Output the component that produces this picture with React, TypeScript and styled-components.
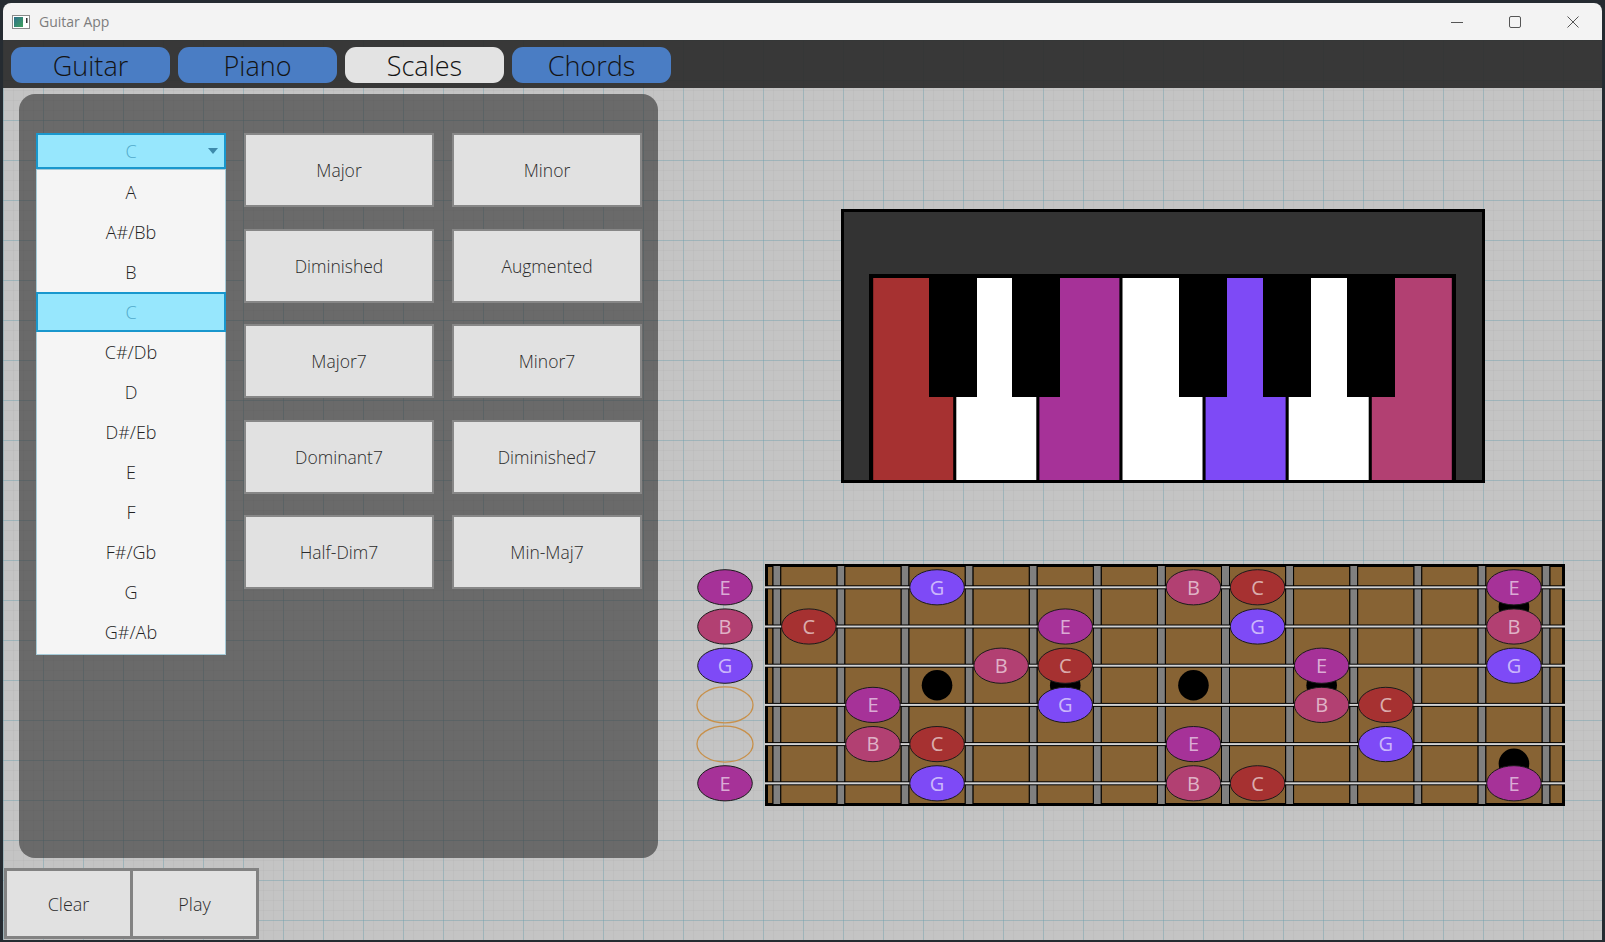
import React from "react";
import styled, { createGlobalStyle } from "styled-components";

const GlobalStyle = createGlobalStyle`
  html, body { margin: 0; padding: 0; }
  body {
    width: 1605px;
    height: 942px;
    overflow: hidden;
    background: #252b31;
    font-family: "Open Sans", "Noto Sans", sans-serif;
  }
  * { box-sizing: border-box; }
`;

const Desktop = styled.div`
  padding: 3px 3px 0 3px;
`;

const Window = styled.div`
  width: 1599px;
  height: 937px;
  display: flex;
  flex-direction: column;
  border-radius: 8px 8px 0 0;
  overflow: hidden;
`;

const TitleBar = styled.div`
  flex: none;
  height: 37px;
  background: #f3f3f3;
  display: flex;
  align-items: center;
  padding-left: 9px;
`;

const TitleText = styled.span`
  margin-left: 9px;
  font-size: 14px;
  color: #7d7d7d;
  line-height: 1;
`;

const Controls = styled.div`
  margin-left: auto;
  display: flex;
  height: 100%;
`;

const ControlButton = styled.div`
  width: 58px;
  height: 100%;
  display: flex;
  align-items: center;
  justify-content: center;
`;

const Content = styled.div`
  flex: 1;
  display: flex;
  flex-direction: column;
  background-color: #c4c4c4;
  background-image:
    linear-gradient(to right, rgba(100, 160, 175, 0.36) 1px, transparent 1px),
    linear-gradient(to bottom, rgba(100, 160, 175, 0.36) 1px, transparent 1px),
    linear-gradient(to right, rgba(0, 0, 0, 0.025) 1px, transparent 1px),
    linear-gradient(to bottom, rgba(0, 0, 0, 0.025) 1px, transparent 1px);
  background-size: 40px 40px, 40px 40px, 10px 10px, 10px 10px;
`;

const TabBar = styled.div`
  flex: none;
  height: 48px;
  padding: 7px 0 5px 8px;
  display: flex;
  gap: 8px;
  background: rgba(45, 45, 45, 0.93);
`;

const Tab = styled.div<{ $active?: boolean }>`
  width: 159px;
  height: 36px;
  border-radius: 11px;
  background: ${(p) => (p.$active ? "#e3e3e3" : "#4a7dc4")};
  color: #141414;
  font-size: 27px;
  font-weight: 300;
  display: flex;
  align-items: center;
  justify-content: center;
  line-height: 1;
`;

const Body = styled.div`
  flex: none;
  display: flex;
  align-items: flex-start;
  padding: 6px 0 0 16px;
`;

const Panel = styled.div`
  flex: none;
  width: 639px;
  height: 764px;
  border-radius: 16px;
  background: rgba(50, 50, 50, 0.62);
  padding: 39px 16px 0 17px;
  display: flex;
  align-items: flex-start;
  gap: 18px;
`;

const DropColumn = styled.div`
  width: 190px;
  display: flex;
  flex-direction: column;
`;

const DropHeader = styled.div`
  height: 36px;
  border: 2px solid #1997cd;
  background: #97e7fd;
  color: #52aacb;
  font-size: 18px;
  font-weight: 300;
  display: grid;
  grid-template-columns: 20px 1fr 20px;
  align-items: center;
  justify-items: center;
`;

const Caret = styled.span`
  width: 0;
  height: 0;
  border-left: 5px solid transparent;
  border-right: 5px solid transparent;
  border-top: 6px solid #3d8aab;
  margin-left: -2px;
`;

const DropList = styled.div`
  border: 1px solid #a6cbd8;
  background: #f5f5f5;
  padding: 2px 0;
`;

const DropItem = styled.div<{ $selected?: boolean }>`
  height: 40px;
  display: flex;
  align-items: center;
  justify-content: center;
  font-size: 18px;
  font-weight: 350;
  color: ${(p) => (p.$selected ? "#52aacb" : "#222")};
  background: ${(p) => (p.$selected ? "#97e7fd" : "transparent")};
  border: ${(p) => (p.$selected ? "2px solid #1997cd" : "none")};
  margin: ${(p) => (p.$selected ? "0 -1px" : "0")};
`;

const ButtonGrid = styled.div`
  display: grid;
  grid-template-columns: 190px 190px;
  grid-auto-rows: 74px;
  column-gap: 18px;
  row-gap: 21.5px;
`;

const ChordButton = styled.div`
  background: #e1e1e1;
  border: 2px solid #878787;
  color: #2b2b2b;
  font-size: 17.5px;
  font-weight: 350;
  display: flex;
  align-items: center;
  justify-content: center;
`;

const RightColumn = styled.div`
  display: flex;
  flex-direction: column;
  align-items: flex-start;
`;

const PianoBox = styled.div`
  margin: 115px 0 0 183px;
  width: 644px;
  height: 274px;
  border: 3px solid #000;
  background: #333333;
  padding: 62px 0 0 25px;
`;

const KeysFrame = styled.div`
  width: 587px;
  border: 4px solid #000;
  border-bottom: none;
  background: #000;
  display: flex;
`;

const FretSvg = styled.svg`
  display: block;
  margin: 77px 0 0 32px;
`;

const Footer = styled.div`
  display: flex;
  margin-top: 10px;
  padding-left: 1px;
`;

const FooterButton = styled.div`
  width: 129px;
  height: 71px;
  background: #e1e1e1;
  border: 3px solid #828282;
  color: #2b2b2b;
  font-size: 18px;
  font-weight: 350;
  display: flex;
  align-items: center;
  justify-content: center;
  & + & {
    margin-left: -3px;
  }
`;

const COLORS: Record<string, string> = {
  C: "#a63131",
  E: "#a63298",
  G: "#7e4af6",
  B: "#b24072",
};

const ROOTS = ["A", "A#/Bb", "B", "C", "C#/Db", "D", "D#/Eb", "E", "F", "F#/Gb", "G", "G#/Ab"];
const CHORDS = ["Major", "Minor", "Diminished", "Augmented", "Major7", "Minor7", "Dominant7", "Diminished7", "Half-Dim7", "Min-Maj7"];

const WHITE_KEYS = [COLORS.C, "#ffffff", COLORS.E, "#ffffff", COLORS.G, "#ffffff", COLORS.B];
const BLACK_KEYS = [56, 139, 306, 390, 474];

const Keyboard = () => (
  <svg width={579} height={202} viewBox="0 0 579 202">
    <rect x={0} y={0} width={579} height={202} fill="#000" />
    {WHITE_KEYS.map((c, i) => (
      <rect key={i} x={0.2 + 83.1 * i} y={0} width={80} height={202} fill={c} />
    ))}
    {BLACK_KEYS.map((x, i) => (
      <rect key={i} x={x} y={0} width={48} height={119} fill="#000" />
    ))}
  </svg>
);

// fretboard geometry (svg origin = page 690,560)
const fbx = (k: number) => 83.3 + 64.1 * k;
const cx = (fret: number) => (fret === 0 ? 35 : 118.85 + 64.1 * (fret - 1));
const sy = (s: number) => 27.3 + 39.2 * s;

type Note = [number, number, string];
const NOTES: Note[] = [
  [0, 0, "E"], [0, 3, "G"], [0, 7, "B"], [0, 8, "C"], [0, 12, "E"],
  [1, 0, "B"], [1, 1, "C"], [1, 5, "E"], [1, 8, "G"], [1, 12, "B"],
  [2, 0, "G"], [2, 4, "B"], [2, 5, "C"], [2, 9, "E"], [2, 12, "G"],
  [3, 2, "E"], [3, 5, "G"], [3, 9, "B"], [3, 10, "C"],
  [4, 2, "B"], [4, 3, "C"], [4, 7, "E"], [4, 10, "G"],
  [5, 0, "E"], [5, 3, "G"], [5, 7, "B"], [5, 8, "C"], [5, 12, "E"],
];

const DOTS: [number, number][] = [
  [cx(3), (sy(2) + sy(3)) / 2],
  [cx(5), (sy(2) + sy(3)) / 2],
  [cx(7), (sy(2) + sy(3)) / 2],
  [cx(9), (sy(2) + sy(3)) / 2],
  [cx(12), (sy(0) + sy(1)) / 2],
  [cx(12), (sy(4) + sy(5)) / 2],
];

const Fretboard = () => {
  const bars = Array.from({ length: 13 }, (_, k) => fbx(k));
  const cells: [number, number][] = [];
  let prev = 77;
  bars.forEach((b) => {
    cells.push([prev, b]);
    prev = b + 7;
  });
  cells.push([prev, 873]);
  return (
    <FretSvg width={880} height={250} viewBox="0 0 880 250">
      <rect x={75} y={4} width={800} height={242} fill="#000" />
      {bars.map((b, i) => (
        <rect key={"b" + i} x={b} y={6} width={7} height={238} fill="#808080" />
      ))}
      {cells.map(([a, b], i) => (
        <rect key={"c" + i} x={a + 0.5} y={6.5} width={b - a - 1} height={237} fill="#876334" stroke="#000" strokeWidth={1} />
      ))}
      {Array.from({ length: 6 }, (_, s) => (
        <g key={"s" + s}>
          <rect x={75} y={sy(s) - 2} width={800} height={4} fill="#000" />
          <rect x={75} y={sy(s) - 1} width={800} height={2} fill="#d2d2d2" />
        </g>
      ))}
      {DOTS.map(([x, y], i) => (
        <circle key={"d" + i} cx={x} cy={y} r={15.3} fill="#000" />
      ))}
      <ellipse cx={35} cy={sy(3)} rx={28} ry={18} fill="none" stroke="#c8904a" strokeWidth={1.3} />
      <ellipse cx={35} cy={sy(4)} rx={28} ry={18} fill="none" stroke="#c8904a" strokeWidth={1.3} />
      {NOTES.map(([s, f, n], i) => (
        <g key={"n" + i}>
          <ellipse cx={cx(f)} cy={sy(s)} rx={27.3} ry={17.6} fill={COLORS[n]} stroke="#1b1b1b" strokeWidth={1} />
          <text
            x={cx(f)}
            y={sy(s) + 7.2}
            textAnchor="middle"
            fontFamily="'Open Sans', sans-serif"
            fontSize={20}
            fill="rgba(255,255,255,0.62)"
          >
            {n}
          </text>
        </g>
      ))}
    </FretSvg>
  );
};

const AppIcon = () => (
  <svg width={18} height={14} viewBox="0 0 18 14">
    <defs>
      <linearGradient id="ig" x1="0" y1="0" x2="1" y2="1">
        <stop offset="0" stopColor="#2e6f8c" />
        <stop offset="1" stopColor="#3fa15c" />
      </linearGradient>
    </defs>
    <rect x={0.5} y={0.5} width={17} height={13} fill="#fff" stroke="#8a8a8a" />
    <rect x={2} y={2} width={9} height={10} fill="url(#ig)" />
    <rect x={14} y={3} width={1.5} height={5} fill="#333" />
  </svg>
);

export default function App() {
  return (
    <>
      <GlobalStyle />
      <Desktop>
        <Window>
          <TitleBar>
            <AppIcon />
            <TitleText>Guitar App</TitleText>
            <Controls>
              <ControlButton>
                <svg width={12} height={12} viewBox="0 0 12 12">
                  <line x1={0} y1={6.5} x2={12} y2={6.5} stroke="#555" strokeWidth={1} />
                </svg>
              </ControlButton>
              <ControlButton>
                <svg width={12} height={12} viewBox="0 0 12 12">
                  <rect x={0.5} y={0.5} width={11} height={11} rx={1.5} fill="none" stroke="#555" strokeWidth={1} />
                </svg>
              </ControlButton>
              <ControlButton>
                <svg width={12} height={12} viewBox="0 0 12 12">
                  <path d="M0.5 0.5 L11.5 11.5 M11.5 0.5 L0.5 11.5" stroke="#555" strokeWidth={1} />
                </svg>
              </ControlButton>
            </Controls>
          </TitleBar>
          <Content>
            <TabBar>
              <Tab>Guitar</Tab>
              <Tab>Piano</Tab>
              <Tab $active>Scales</Tab>
              <Tab>Chords</Tab>
            </TabBar>
            <Body>
              <Panel>
                <DropColumn>
                  <DropHeader>
                    <span />
                    <span>C</span>
                    <Caret />
                  </DropHeader>
                  <DropList>
                    {ROOTS.map((r) => (
                      <DropItem key={r} $selected={r === "C"}>
                        {r}
                      </DropItem>
                    ))}
                  </DropList>
                </DropColumn>
                <ButtonGrid>
                  {CHORDS.map((c) => (
                    <ChordButton key={c}>{c}</ChordButton>
                  ))}
                </ButtonGrid>
              </Panel>
              <RightColumn>
                <PianoBox>
                  <KeysFrame>
                    <Keyboard />
                  </KeysFrame>
                </PianoBox>
                <Fretboard />
              </RightColumn>
            </Body>
            <Footer>
              <FooterButton>Clear</FooterButton>
              <FooterButton>Play</FooterButton>
            </Footer>
          </Content>
        </Window>
      </Desktop>
    </>
  );
}
